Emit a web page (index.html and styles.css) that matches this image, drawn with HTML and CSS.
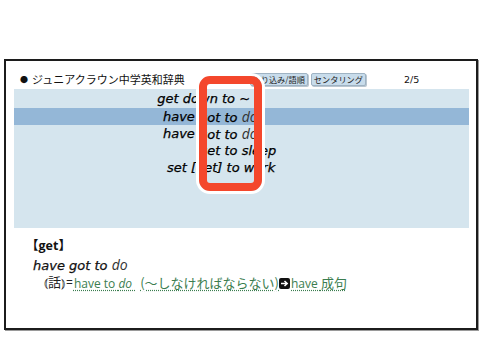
FILE: index.html
```html
<!DOCTYPE html>
<html lang="ja">
<head>
<meta charset="utf-8">
<title>ジュニアクラウン中学英和辞典</title>
<link rel="stylesheet" href="styles.css">
</head>
<body>
<div class="stage">
  <div class="frame">
    <div class="header">
      <span class="bullet">●</span>
      <span class="title">ジュニアクラウン中学英和辞典</span>
      <span class="btn btn-filter">絞り込み/語順</span>
      <span class="btn">センタリング</span>
      <span class="page">2/5</span>
    </div>
    <div class="panel">
      <div class="row"><span class="pre">get do</span><span class="post">wn to ~</span></div>
      <div class="row selected"><span class="pre">have </span><span class="post">got to <span class="thin">do</span></span></div>
      <div class="row"><span class="pre">have </span><span class="post">got to <span class="thin">do</span></span></div>
      <div class="row"><span class="pre"></span><span class="post">get to sleep</span></div>
      <div class="row row-shift"><span class="pre">set [</span><span class="post">get] to work</span></div>
    </div>
    <div class="entry">
      <div class="head"><span class="br">【</span>get<span class="br">】</span></div>
      <div class="phrase">have got to <span class="thin">do</span></div>
      <div class="def"><span class="label">⦅話⦆</span><span class="eq">=</span><span class="link">have to <i>do</i> <span class="ja gloss">(〜しなければならない)</span></span> <span class="arrow"><svg width="11" height="11" viewBox="0 0 11 11"><rect x="0" y="0" width="11" height="11" rx="2" fill="#111"/><path d="M2 5.5H8M5.5 3L8.2 5.5L5.5 8" stroke="#fff" stroke-width="1.5" fill="none"/></svg></span><span class="link">have <span class="ja">成句</span></span></div>
    </div>
    <div class="hilite"></div>
  </div>
</div>
</body>
</html>
```

FILE: styles.css
```css
html, body {
  margin: 0;
  padding: 0;
  background: #fff;
}
.stage {
  width: 502px;
  height: 344px;
  padding: 59px 0 0 4px;
  box-sizing: border-box;
}
.frame {
  position: relative;
  width: 474px;
  height: 271px;
  box-sizing: border-box;
  border: 2px solid #1c1c1c;
  box-shadow: 1px 1px 0 #9a9a9a;
  padding: 0 7px 0 8px;
  font-family: "DejaVu Sans", sans-serif;
  color: #111;
}
.header {
  display: flex;
  align-items: center;
  height: 20px;
  padding-top: 8px;
  font-family: "Noto Sans CJK JP", sans-serif;
}
.bullet {
  font-size: 8px;
  margin-left: 6px;
  width: 12px;
}
.title {
  font-size: 11px;
}
.btn {
  font-size: 8.2px;
  background: #c8dceb;
  border: 1px solid #9fb3c3;
  border-radius: 2px;
  box-shadow: 1px 1px 0 #b9c6d0;
  height: 11px;
  line-height: 11px;
  padding: 0 2px;
  color: #222;
}
.btn-filter {
  margin-left: auto;
  margin-right: 3px;
}
.page {
  font-family: "DejaVu Sans", sans-serif;
  font-size: 9.5px;
  margin-left: 38px;
  width: 65px;
}
.panel {
  height: 139px;
  box-sizing: border-box;
  padding-top: 1px;
  background: #d5e5ee;
}
.row {
  display: grid;
  grid-template-columns: 185px 1fr;
  height: 17px;
  line-height: 17px;
  font-style: italic;
  font-size: 13px;
  color: #000;
  -webkit-text-stroke: 0.25px #000;
  white-space: pre;
}
.row:first-child {
  height: 18px;
}
.row.row-shift {
  grid-template-columns: 182px 1fr;
}
.row.selected {
  background: #94b7d7;
}
.pre {
  text-align: right;
}
.thin {
  font-family: "Open Sans", sans-serif;
  font-style: italic;
  font-weight: 400;
  color: #333;
  -webkit-text-stroke: 0;
}
.row .thin {
  font-size: 14px;
}
.entry {
  padding: 7px 0 0 13px;
}
.head {
  height: 20px;
  line-height: 20px;
  font-size: 12.5px;
  font-weight: bold;
  font-family: "Open Sans", "DejaVu Sans", sans-serif;
}
.br {
  font-family: "Noto Sans CJK JP", sans-serif;
  font-weight: bold;
}
.head .br:first-child {
  margin-left: -1px;
}
.phrase {
  height: 20px;
  line-height: 20px;
  font-size: 13px;
  font-style: italic;
  -webkit-text-stroke: 0.25px #111;
  padding-left: 6px;
}
.phrase .thin {
  font-size: 14px;
}
.def {
  padding-left: 17px;
  height: 16px;
  line-height: 16px;
  font-size: 12px;
  font-family: "Open Sans", "Noto Sans CJK JP", sans-serif;
  color: #222;
  display: flex;
  align-items: center;
  white-space: pre;
}
.label {
  font-family: "DejaVu Sans", "Noto Sans CJK JP", sans-serif;
  font-size: 13px;
  margin-right: 1px;
}
.eq {
  margin-right: 1px;
}
.ja {
  font-family: "Noto Sans CJK JP", sans-serif;
  font-size: 13px;
}
.gloss {
  margin-left: 5px;
}
.link {
  color: #3b7d4f;
  text-decoration: underline dotted #3b7d4f;
  text-underline-offset: 2px;
}
.link i {
  font-style: italic;
}
.arrow {
  display: inline-flex;
  margin-right: 1px;
}
.hilite {
  position: absolute;
  left: 193px;
  top: 15px;
  width: 63px;
  height: 115px;
  box-sizing: border-box;
  border: 8px solid #f4472c;
  border-radius: 11px;
  box-shadow: 0 0 0 3px #fff;
}
```
